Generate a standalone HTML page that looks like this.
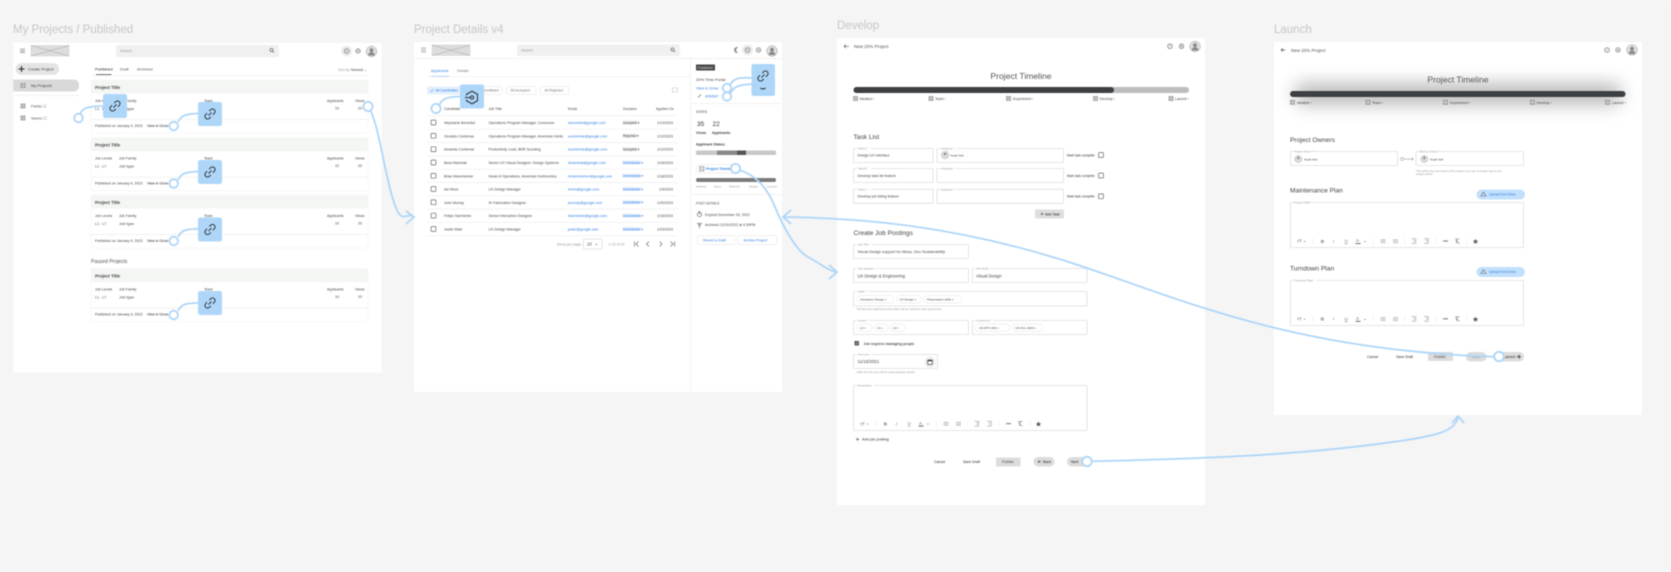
<!DOCTYPE html>
<html lang="en"><head><meta charset="utf-8"><title>Project flows</title>
<style>
html,body{margin:0;padding:0;background:#f5f5f5;width:1671px;height:572px;overflow:hidden}
svg{display:block;filter:blur(.4px)}
text{font-family:"Liberation Sans",sans-serif;font-size:4.4px;fill:#555}
.h{font-size:11.5px;fill:#c6c6c6}
.d{fill:#222}.m{fill:#777}.l{fill:#999;font-size:3.6px}.b{fill:#2f7fe0}
.t{font-size:5px;font-weight:bold;fill:#444}
.s{font-size:6.6px;fill:#444}
.pt{font-size:8.6px;fill:#555;text-anchor:middle}
.lb{font-size:3.6px;fill:#444}
.v{font-size:4.6px;fill:#555}
.f{fill:#fff;stroke:#ddd;stroke-width:.8}
.line{stroke:#eee;stroke-width:.7;fill:none}
.c{fill:none;stroke:#aed6f9;stroke-width:1.8}
.n{fill:#fff;stroke:#aed6f9;stroke-width:1.8}
.a{fill:#aed6f9}
.i{fill:none;stroke:#666;stroke-width:.7}
.k{fill:none;stroke:#222;stroke-width:.9}
.chip{fill:#fff;stroke:#e2e2e2;stroke-width:.5}
</style></head><body>
<svg xmlns="http://www.w3.org/2000/svg" width="1671" height="572" viewBox="0 0 1671 572">
<defs>
<g id="ph"><rect x="-2" y="-2" width="4" height="4" fill="#e4e4e4" stroke="#666" stroke-width=".5"/><path d="M-2-2 2 2M2-2-2 2" stroke="#666" stroke-width=".4"/></g>
<g id="logo"><rect width="38" height="10.5" fill="#ddd" stroke="#bbb" stroke-width=".3"/><path d="M0 0 38 10.5M38 0 0 10.5" stroke="#999" stroke-width=".4"/></g>
<g id="av"><circle r="5.3" fill="#e0e0e0" stroke="#999" stroke-width=".5"/><circle cy="-1.3" r="1.9" fill="#888"/><path d="M-3.3 4C-3 1-1.500 .8 0 .8S3 1 3.300 4Z" fill="#888"/></g>
<g id="gear"><circle r="2.2" class="i"/><circle r=".8" fill="#666"/></g>
<g id="help"><circle r="2.3" class="i"/><path d="M0-1V.6" stroke="#666" stroke-width=".6"/></g>
<g id="link"><path class="k" transform="rotate(-45)" d="M-1.500-2.600H-3.500A2.600 2.600 0 0 0-3.500 2.600H-1.500M1.500-2.600H3.500A2.600 2.600 0 0 1 3.500 2.600H1.500M-2.200 0H2.200"/></g>
<g id="box"><rect x="-2.4" y="-2.4" width="4.8" height="4.8" rx=".6" fill="#fff" stroke="#666" stroke-width=".7"/></g>
<g id="tb" fill="#666">
<text x="6" y="1.5" style="font-size:4.4px" fill="#666">тT</text><path d="M12.5 0h2l-1 1Z"/>
<rect x="21.5" y="-3" width=".4" height="6" fill="#e2e2e2"/>
<text x="29.7" y="1.6" style="font-size:4.6px;font-weight:bold;fill:#777">B</text>
<text x="41.7" y="1.6" style="font-size:4.6px;font-style:italic;fill:#777">I</text>
<text x="53.5" y="1.4" style="font-size:4.6px;text-decoration:underline;fill:#777">U</text>
<text x="65" y="1" style="font-size:4.6px;fill:#666">A</text><rect x="64.6" y="2" width="5" height=".7" fill="#333"/><path d="M73 0h2l-1 1Z"/>
<rect x="82" y="-3" width=".4" height="6" fill="#e2e2e2"/>
<path d="M89.5-1.5h5M89.5 0h5M89.5 1.5h5M102-1.5h5M102 0h5M102 1.5h5" stroke="#888" stroke-width=".5"/>
<rect x="113.5" y="-3" width=".4" height="6" fill="#e2e2e2"/>
<path d="M120.5-2.5h5M122.5-1h3M122.5.5h3M120.5 2.2h5M133-2.5h5M135-1h3M135 .5h3M133 2.2h5" stroke="#888" stroke-width=".5"/>
<rect x="144.5" y="-3" width=".4" height="6" fill="#e2e2e2"/>
<path d="M152-.2h5" stroke="#888" stroke-width="1.2"/>
<path d="M164-2.2h4.5M166.3-2 165.5 2.2M164.5-.8 168.5 2.4" stroke="#777" stroke-width=".6" fill="none"/>
<rect x="175.5" y="-3" width=".4" height="6" fill="#e2e2e2"/>
<path d="M184.5-2.4 185.3-.6 187.2-.5 185.8.7 186.3 2.6 184.5 1.6 182.7 2.6 183.2.7 181.8-.5 183.7-.6Z" fill="#555"/>
</g>
<g id="card">
<rect x="91" y="0" width="277" height="53" rx="1.5" fill="#fff" stroke="#f0f0f0" stroke-width=".5"/>
<path d="M91 13.5V1.5Q91 0 92.5 0H366.5Q368 0 368 1.5V13.5Z" fill="#f4f6f4"/>
<text class="t" x="95" y="9" style="font-size:4.4px">Project Title</text>
<text class="lb" x="95" y="22">Job Levels</text><text class="lb" x="119" y="22">Job Family</text><text class="lb" x="204" y="22">Team</text><text class="lb" x="327" y="22">Applicants</text><text class="lb" x="355" y="22">Views</text>
<text class="lb" x="95" y="30">L1 - L7</text><text class="lb" x="119" y="30" style="font-size:4px">Job type</text><text class="lb" x="335" y="29.5">10</text><text class="lb" x="358" y="29.5">20</text>
<path class="line" d="M91 39.5H368"/>
<text class="lb" x="95" y="47" style="font-size:3.6px">Published on January 4, 2023</text><text class="d" x="147" y="47" style="font-size:3.6px">View in Grow</text>
</g>
<g id="sq"><rect width="24" height="24" rx="2.2" class="a"/><use href="#link" x="12" y="12"/></g>
<g id="row"><use href="#box" x="433.5"/><path class="line" d="M427 6.7H678"/></g>
</defs>

<rect width="1671" height="572" fill="#f5f5f5"/>
<text class="h" x="13" y="33">My Projects / Published</text>
<text class="h" x="414" y="33">Project Details v4</text>
<text class="h" x="837" y="29">Develop</text>
<text class="h" x="1274" y="33">Launch</text>

<!-- Frame 1 -->
<rect x="13.3" y="42.7" width="368.4" height="330" fill="#fff"/>
<path d="M20 49h5M20 50.7h5M20 52.4h5" stroke="#666" stroke-width=".6"/>
<use href="#logo" x="31" y="45.5"/>
<rect x="116" y="45" width="163" height="12" rx="2" fill="#f0f0f0"/>
<text class="l" x="120" y="52" style="font-size:3.8px">Search</text>
<circle cx="271.5" cy="50" r="1.5" class="i"/><path d="M272.6 51.1 274 52.6" class="i"/>
<circle cx="346.7" cy="51" r="5.4" fill="#ececec"/><use href="#help" x="346.7" y="51"/>
<use href="#gear" x="358" y="51"/>
<use href="#av" x="371.5" y="51.5"/>
<rect x="15.5" y="63" width="43.5" height="12" rx="6" fill="#e4e4e4"/>
<path d="M18.5 69h6M21.5 66v6" stroke="#222" stroke-width="1"/>
<text class="v" x="28" y="70.7" style="font-size:4px;fill:#444">Create Project</text>
<path d="M13.3 79.5H73Q79 79.5 79 85.5T73 91.5H13.3Z" fill="#d9d9d9"/>
<use href="#ph" x="23" y="85.5"/><text x="31" y="87" style="font-size:4px;fill:#444">My Projects</text>
<path class="line" d="M13.3 95.5H79"/>
<use href="#ph" x="23" y="106"/><text x="31" y="107.5" style="font-size:4px">Fields ☐</text>
<use href="#ph" x="23" y="118"/><text x="31" y="119.5" style="font-size:4px">Saves ☐</text>
<text class="d" x="95" y="70.5" style="font-size:4px">Published</text><text x="120" y="70.5" style="font-size:4px">Draft</text><text x="137" y="70.5" style="font-size:4px">Archived</text>
<rect x="96" y="74.2" width="15.5" height=".8" fill="#555"/><path class="line" d="M91 75.5H368"/>
<text class="l" x="338" y="71">Sort by:</text><text class="lb" x="351" y="71">Newest ⌄</text>
<use href="#card" y="80"/><use href="#card" y="137.7"/><use href="#card" y="195"/>
<text x="91" y="263" style="font-size:5px;fill:#555">Paused Projects</text>
<use href="#card" y="268.6"/>
<g>
<path class="c" d="M79 116C82 108 86 106.500 103 106"/><circle class="n" cx="78.500" cy="118" r="4.300"/><use href="#sq" x="103" y="94"/>
<path class="c" d="M178 122C181 116 184 114 198 113.500"/><circle class="n" cx="173.700" cy="126" r="4.300"/><use href="#sq" x="198" y="102"/>
<path class="c" d="M178 180C181 174 184 172 198 171.500"/><circle class="n" cx="173.700" cy="183.500" r="4.300"/><use href="#sq" x="198" y="160"/>
<path class="c" d="M178 237C181 231 184 229 198 229"/><circle class="n" cx="173.700" cy="241" r="4.300"/><use href="#sq" x="198" y="217.500"/>
<path class="c" d="M178 311C181 305 184 303 198 303"/><circle class="n" cx="173.700" cy="315" r="4.300"/><use href="#sq" x="198" y="291"/>
</g>

<!-- Frame 2 -->
<rect x="414" y="42" width="368" height="350" fill="#fff"/>
<path d="M421 48h5M421 50h5M421 52h5" stroke="#666" stroke-width=".6"/>
<use href="#logo" x="432" y="45"/>
<rect x="517" y="44.500" width="163" height="11.500" rx="2" fill="#f0f0f0"/>
<text class="l" x="521" y="51.500" style="font-size:3.800px">Search</text>
<circle cx="672.500" cy="49.500" r="1.500" class="i"/><path d="M673.600 50.600 675 52" class="i"/>
<path class="i" d="M737 47.500A2.500 2.500 0 1 0 737 52.500 3 3 0 0 1 737 47.500Z"/>
<circle cx="747.500" cy="50" r="5.400" fill="#ececec"/><use href="#help" x="747.500" y="50"/><use href="#gear" x="758.500" y="50"/><use href="#av" x="772" y="51"/>
<path class="line" d="M414 58.500H782M690.500 58.500V392"/>
<text class="b" x="431" y="72" style="font-size:3.800px">Applicants</text><text class="m" x="457" y="72" style="font-size:3.800px">Details</text>
<rect x="431" y="76" width="18" height=".8" fill="#5b9cf0"/><path class="line" d="M427 76.700H690"/>
<rect x="427" y="86.500" width="38" height="8" rx="2" fill="#e3effd"/><path d="M430 90.500 431.500 92 433.500 89" fill="none" stroke="#4a90e2" stroke-width=".5"/>
<text class="b" x="435.500" y="91.700" style="font-size:3.500px">All Candidates</text>
<rect x="468" y="86.500" width="34" height="8" rx="2" class="chip"/><text class="m" x="482" y="91.700" style="font-size:3.500px">Shortlisted</text>
<rect x="506.500" y="86.500" width="29.500" height="8" rx="2" class="chip"/><text class="m" x="510.500" y="91.700" style="font-size:3.500px">All Accepted</text>
<rect x="540.500" y="86.500" width="28.500" height="8" rx="2" class="chip"/><text class="m" x="544.500" y="91.700" style="font-size:3.500px">All Rejected</text>
<rect x="672.500" y="88" width="5" height="4" fill="none" stroke="#bbb" stroke-width=".5"/>
<g style="font-size:3.600px">
<text class="lb" x="444" y="110">Candidate</text><text class="lb" x="488.500" y="110">Job Title</text><text class="lb" x="568" y="110">Email</text><text class="lb" x="623" y="110">Decision</text><text class="lb" x="656" y="110">Applied On</text>
</g>
<path class="line" d="M427 115.600H678"/>
<use href="#row" y="122.500"/><use href="#row" y="135.800"/><use href="#row" y="149.200"/><use href="#row" y="162.500"/><use href="#row" y="175.800"/><use href="#row" y="189"/><use href="#row" y="202.300"/><use href="#row" y="215.600"/><use href="#row" y="229"/>
<g class="rows">
<rect x="622.500" y="120.500" width="15" height="4" fill="#eee"/><rect x="622.500" y="133.800" width="14" height="4" fill="#eee"/><rect x="622.500" y="147.200" width="15" height="4" fill="#eee"/>
<rect x="622.500" y="160.500" width="18" height="4" fill="#e3effd"/><rect x="622.500" y="173.800" width="18" height="4" fill="#e3effd"/><rect x="622.500" y="187" width="18" height="4" fill="#e3effd"/><rect x="622.500" y="200.300" width="18" height="4" fill="#e3effd"/><rect x="622.500" y="213.600" width="18" height="4" fill="#e3effd"/><rect x="622.500" y="227" width="18" height="4" fill="#e3effd"/>
<text class="lb" x="444" y="124">Stephanie Benedict</text><text class="lb" x="488.500" y="124">Operations Program Manager, Consumer</text><text class="lb" x="568" y="124" style="fill:#2f7fe0">sbenedict@google.com</text><text class="lb" x="623" y="123.800" style="font-size:3.300px">Accepted ▾</text><text class="lb" x="657" y="124">1/13/2023</text>
<text class="lb" x="444" y="137.300">Osvaldo Contreras</text><text class="lb" x="488.500" y="137.300">Operations Program Manager, American Hortic</text><text class="lb" x="568" y="137.300" style="fill:#2f7fe0">ocontreras@google.com</text><text class="lb" x="623" y="137.100" style="font-size:3.300px">Rejected ▾</text><text class="lb" x="657" y="137.300">1/12/2023</text>
<text class="lb" x="444" y="150.700">Amanda Contreras</text><text class="lb" x="488.500" y="150.700">Productivity Lead, BDR Scouting</text><text class="lb" x="568" y="150.700" style="fill:#2f7fe0">acontreras@google.com</text><text class="lb" x="623" y="150.500" style="font-size:3.300px">Accepted ▾</text><text class="lb" x="657" y="150.700">1/12/2023</text>
<text class="lb" x="444" y="164">Bess Marshall</text><text class="lb" x="488.500" y="164">Senior UX Visual Designer, Design Systems</text><text class="lb" x="568" y="164" style="fill:#2f7fe0">dmarshall@google.com</text><text class="lb" x="623" y="163.800" style="font-size:3.300px;fill:#2f7fe0">Unreviewed ▾</text><text class="lb" x="657" y="164">1/16/2023</text>
<text class="lb" x="444" y="177.300">Brian Mannheimer</text><text class="lb" x="488.500" y="177.300">Head of Operations, American Hortinomics</text><text class="lb" x="568" y="177.300" style="fill:#2f7fe0">bmannheimer@google.com</text><text class="lb" x="623" y="177.100" style="font-size:3.300px;fill:#2f7fe0">Unreviewed ▾</text><text class="lb" x="657" y="177.300">1/18/2023</text>
<text class="lb" x="444" y="190.500">Ian Mora</text><text class="lb" x="488.500" y="190.500">UX Design Manager</text><text class="lb" x="568" y="190.500" style="fill:#2f7fe0">imora@google.com</text><text class="lb" x="623" y="190.300" style="font-size:3.300px;fill:#2f7fe0">Unreviewed ▾</text><text class="lb" x="659" y="190.500">1/9/2023</text>
<text class="lb" x="444" y="203.800">John Murray</text><text class="lb" x="488.500" y="203.800">Sr Fabrication Designer</text><text class="lb" x="568" y="203.800" style="fill:#2f7fe0">jmurray@google.com</text><text class="lb" x="623" y="203.600" style="font-size:3.300px;fill:#2f7fe0">Unreviewed ▾</text><text class="lb" x="657" y="203.800">1/20/2023</text>
<text class="lb" x="444" y="217.100">Felipe Sarmiento</text><text class="lb" x="488.500" y="217.100">Senior Interaction Designer</text><text class="lb" x="568" y="217.100" style="fill:#2f7fe0">fsarmiento@google.com</text><text class="lb" x="623" y="216.900" style="font-size:3.300px;fill:#2f7fe0">Unreviewed ▾</text><text class="lb" x="657" y="217.100">1/16/2023</text>
<text class="lb" x="444" y="230.500">Justin Watz</text><text class="lb" x="488.500" y="230.500">UX Design Manager</text><text class="lb" x="568" y="230.500" style="fill:#2f7fe0">jwatz@google.com</text><text class="lb" x="623" y="230.300" style="font-size:3.300px;fill:#2f7fe0">Unreviewed ▾</text><text class="lb" x="657" y="230.500">1/23/2023</text>
</g>
<text class="l" x="557" y="245.500">Items per page:</text>
<rect x="583.500" y="239" width="18.500" height="10" rx=".5" class="f"/><text class="lb" x="587" y="245.500" style="font-size:4.200px">10</text><path d="M595.500 244h2l-1 1.200Z" fill="#666"/>
<text class="l" x="608.500" y="245.500">1-10 of 22</text>
<path class="i" d="M634.500 241.500v5M638.500 241.500 636 244 638.500 246.500M649 241.500 646.500 244 649 246.500M659.500 241.500 662 244 659.500 246.500M670.500 241.500 673 244 670.500 246.500M674.500 241.500v5"/>
<!-- right panel -->
<rect x="696" y="64.500" width="19" height="6" rx=".5" fill="#444"/><text x="697.500" y="69" style="font-size:3.500px;fill:#ddd">Published</text>
<text x="696" y="81" style="font-size:4px;fill:#444">20% Time Portal</text><text class="b" x="696" y="89.500" style="font-size:3.800px">View in Grow</text>
<path class="i" d="M698 97.500 701 94.500"/><text class="b" x="705" y="97.700" style="font-size:3.500px">4050507</text>
<path class="line" d="M690.500 103.500H782M690.500 194.500H782"/>
<text class="lb" x="696" y="113">STATS</text>
<text x="697" y="126" style="font-size:6.500px;fill:#333">35</text><text x="712.500" y="126" style="font-size:6.500px;fill:#333">22</text>
<text class="lb" x="696" y="133.800" style="font-weight:bold">Views</text><text class="lb" x="712" y="133.800" style="font-weight:bold">Applicants</text>
<text class="lb" x="696" y="145.500" style="font-weight:bold">Applicant Status:</text>
<rect x="696" y="150.500" width="80" height="4.500" rx="1" fill="#c8c8c8"/><rect x="717" y="150.500" width="20" height="4.500" fill="#888"/><rect x="737" y="150.500" width="9" height="4.500" fill="#555"/>
<rect x="696" y="164.500" width="42" height="8.500" rx="4.200" fill="#fff" stroke="#e0e0e0" stroke-width=".5"/><rect x="699.500" y="166.500" width="4.500" height="4.500" fill="#ddd" stroke="#666" stroke-width=".4"/>
<text class="b" x="706" y="170" style="font-size:3.600px;font-weight:bold">Project Timeline</text>
<rect x="696" y="178" width="80" height="4" rx="2" fill="#7a7a7a"/>
<text class="l" x="696" y="187.500" style="font-size:3px">Ideation</text><text class="l" x="714" y="187.500" style="font-size:3px">Story</text><text class="l" x="729" y="187.500" style="font-size:3px">Refresh</text><text class="l" x="749" y="187.500" style="font-size:3px">Deploy</text><text class="l" x="767" y="187.500" style="font-size:3px">Launch</text>
<text class="lb" x="696" y="204.500" style="font-size:3.300px">POST DETAILS</text>
<circle cx="699.500" cy="214.500" r="2.200" class="i"/><path class="i" d="M699.500 213v1.500M698.500 211.700h2"/>
<text class="lb" x="705" y="216">Expired December 25, 2022</text>
<path class="i" d="M697 223.500h5M698 225h3M699.500 225v3"/>
<text class="lb" x="705" y="226">Archived 12/31/2022 at 4:30PM</text>
<rect x="697.500" y="235.500" width="37" height="9" rx="1" class="chip"/><text class="b" x="703" y="241.500" style="font-size:3.500px">Revert to Draft</text>
<rect x="737.500" y="235.500" width="39" height="9" rx="1" class="chip"/><text class="b" x="743.500" y="241.500" style="font-size:3.500px">Archive Project</text>
<!-- frame 2 nodes -->
<path class="c" d="M439 105C443 98 447 97 460 96.500"/><circle class="n" cx="436" cy="108.500" r="4.600"/>
<rect x="460" y="84.500" width="24" height="24" rx="2.200" class="a"/>
<path class="k" d="M472 91.200 477.500 94.300V100.700L472 103.800 466.500 100.700V99.500M466.500 95.500V94.300L472 91.200"/><circle cx="472" cy="97.500" r="1.600" class="k"/><path class="k" d="M465 97.500H470"/>
<path class="c" d="M730 85C733 79 738 77 752 78M731 93C733 87 738 85 752 84"/>
<circle class="n" cx="727" cy="88" r="4.200"/><circle class="n" cx="727" cy="96.500" r="4.200"/>
<rect x="751.500" y="64" width="23.500" height="32" rx="2.200" class="a"/><use href="#link" x="763" y="76"/>
<path class="k" d="M760.500 88Q763 90 765.500 88"/>

<!-- Frame 3 -->
<rect x="837" y="38" width="368" height="467" fill="#fff"/>
<path class="i" d="M849 46.300H844M846 44.500 844 46.300 846 48"/>
<text class="v" x="854" y="48" style="font-size:4.500px;fill:#555">New 20% Project</text>
<use href="#help" x="1170" y="46.300"/><use href="#gear" x="1181.500" y="46.300"/><use href="#av" x="1195" y="46.500"/>
<text class="pt" x="1021" y="79">Project Timeline</text>
<rect x="853.500" y="87" width="335.500" height="6" rx="3" fill="#bdbdbd"/><rect x="853.500" y="87" width="260.500" height="6" rx="3" fill="#3c4043"/>
<use href="#ph" x="855.500" y="98.500"/><text class="lb" x="859.500" y="100">Ideation ›</text>
<use href="#ph" x="931" y="98.500"/><text class="lb" x="935" y="100">Team ›</text>
<use href="#ph" x="1008.500" y="98.500"/><text class="lb" x="1013" y="100">Experiment ›</text>
<use href="#ph" x="1095.500" y="98.500"/><text class="lb" x="1099.500" y="100">Develop ›</text>
<use href="#ph" x="1171" y="98.500"/><text class="lb" x="1175" y="100">Launch ›</text>
<text class="s" x="853.500" y="139">Task List</text>
<g>
<rect class="f" x="853.500" y="148.500" width="79.500" height="14" rx=".7"/><rect class="f" x="937" y="148.500" width="126.500" height="14" rx=".7"/>
<rect x="857" y="147" width="14" height="3" fill="#fff"/><text class="l" x="858" y="149.500" style="font-size:2.800px">Task A *</text><rect x="940" y="147" width="16" height="3" fill="#fff"/><text class="l" x="941" y="149.500" style="font-size:2.800px">Assignee *</text>
<text class="lb" x="857.500" y="156.500" style="font-size:3.600px">Design UX interface</text><circle cx="945" cy="155" r="3.700" fill="#ddd" stroke="#999" stroke-width=".4"/><circle cx="945" cy="154" r="1.200" fill="#888"/><rect x="941" y="151" width="27" height="8" rx="4" fill="none" stroke="#eee" stroke-width=".4"/><text class="lb" x="950.500" y="156.500" style="font-size:3px">Noah Nell</text>
<text class="lb" x="1067" y="156.500" style="font-size:3.200px;fill:#333">Mark task complete</text><use href="#box" x="1101" y="155"/>
<rect class="f" x="853.500" y="168.500" width="79.500" height="14" rx=".7"/><rect class="f" x="937" y="168.500" width="126.500" height="14" rx=".7"/>
<rect x="857" y="167" width="14" height="3" fill="#fff"/><text class="l" x="858" y="169.500" style="font-size:2.800px">Task B *</text><rect x="940" y="167" width="16" height="3" fill="#fff"/><text class="l" x="941" y="169.500" style="font-size:2.800px">Assignee *</text>
<text class="lb" x="857.500" y="176.800" style="font-size:3.600px">Develop task list feature</text>
<text class="lb" x="1067" y="176.800" style="font-size:3.200px;fill:#333">Mark task complete</text><use href="#box" x="1101" y="175.500"/>
<rect class="f" x="853.500" y="189.300" width="79.500" height="14" rx=".7"/><rect class="f" x="937" y="189.300" width="126.500" height="14" rx=".7"/>
<rect x="857" y="188" width="14" height="3" fill="#fff"/><text class="l" x="858" y="190.300" style="font-size:2.800px">Task C *</text><rect x="940" y="188" width="16" height="3" fill="#fff"/><text class="l" x="941" y="190.300" style="font-size:2.800px">Assignee *</text>
<text class="lb" x="857.500" y="197.500" style="font-size:3.600px">Develop job listing feature</text>
<text class="lb" x="1067" y="197.500" style="font-size:3.200px;fill:#333">Mark task complete</text><use href="#box" x="1101" y="196.300"/>
</g>
<rect x="1035" y="209.500" width="29" height="9" rx="1" fill="#dedede"/><path d="M1040.500 214h3M1042 212.500v3" stroke="#444" stroke-width=".5"/><text class="lb" x="1045" y="215.300" style="fill:#222">Add Task</text>
<text class="s" x="853.500" y="235">Create Job Postings</text>
<rect class="f" x="853.500" y="244.500" width="115" height="14" rx=".7"/><rect x="857" y="243" width="15" height="3" fill="#fff"/><text class="l" x="858" y="245.500" style="font-size:2.800px">Job Title *</text>
<text class="lb" x="857.500" y="253" style="font-size:3.900px">Visual Design support for Mesa, Geo Sustainability</text>
<rect class="f" x="853.500" y="268.500" width="115" height="14" rx=".7"/><rect x="857" y="267" width="18" height="3" fill="#fff"/><text class="l" x="858" y="269.500" style="font-size:2.800px">Job category</text>
<text class="lb" x="857.500" y="277.300" style="font-size:4.200px">UX Design &amp; Engineering</text>
<rect class="f" x="972.500" y="268.500" width="114.500" height="14" rx=".7"/><rect x="975" y="267" width="15" height="3" fill="#fff"/><text class="l" x="976" y="269.500" style="font-size:2.800px">Job family</text>
<text class="lb" x="976" y="277.300" style="font-size:4.200px">Visual Design</text>
<rect class="f" x="853.500" y="291.500" width="233.500" height="14.500" rx=".7"/><rect x="857" y="290" width="11" height="3" fill="#fff"/><text class="l" x="858" y="292.500" style="font-size:2.800px">Skills *</text>
<rect class="chip" x="857" y="295.500" width="37" height="7.500" rx="3.700"/><text class="lb" x="860" y="300.500" style="font-size:3px">Interaction Design  ×</text>
<rect class="chip" x="896.500" y="295.500" width="25" height="7.500" rx="3.700"/><text class="lb" x="899.500" y="300.500" style="font-size:3px">UX Design  ×</text>
<rect class="chip" x="924" y="295.500" width="38" height="7.500" rx="3.700"/><text class="lb" x="927" y="300.500" style="font-size:3px">Presentation skills  ×</text>
<text class="l" x="856.500" y="310" style="font-size:2.900px">Tell the best applicants what skills will be useful for this opportunity</text>
<rect class="f" x="853.500" y="320.500" width="115" height="14" rx=".7"/><rect x="857" y="319" width="12" height="3" fill="#fff"/><text class="l" x="858" y="321.500" style="font-size:2.800px">Levels *</text>
<rect class="chip" x="857" y="324" width="15" height="7.500" rx="3.700"/><text class="lb" x="860" y="329" style="font-size:3px">L3 ×</text>
<rect class="chip" x="874" y="324" width="14" height="7.500" rx="3.700"/><text class="lb" x="877" y="329" style="font-size:3px">L4 ×</text>
<rect class="chip" x="890" y="324" width="15" height="7.500" rx="3.700"/><text class="lb" x="893" y="329" style="font-size:3px">L5 ×</text>
<rect class="f" x="972.500" y="320.500" width="114.500" height="14" rx=".7"/><rect x="975" y="319" width="18" height="3" fill="#fff"/><text class="l" x="976" y="321.500" style="font-size:2.800px">Location(s) *</text>
<rect class="chip" x="975" y="324" width="34.500" height="7.500" rx="3.700"/><text class="lb" x="979" y="329" style="font-size:3px">US-MTV-150       ×</text>
<rect class="chip" x="1012" y="324" width="31" height="7.500" rx="3.700"/><text class="lb" x="1015" y="329" style="font-size:3px">US-SVL-1600  ×</text>
<rect x="854.500" y="341" width="4.500" height="4.500" rx=".5" fill="#555"/><path d="M855.500 343.300 856.500 344.300 858 342" stroke="#fff" stroke-width=".5" fill="none"/>
<text class="lb" x="863.500" y="345" style="font-size:3.500px;font-weight:bold;fill:#555">Job requires managing people</text>
<rect class="f" x="853.500" y="354.500" width="84" height="14" rx=".7"/><rect x="857" y="353" width="14" height="3" fill="#fff"/><text class="l" x="858" y="355.500" style="font-size:2.800px">Post end</text>
<text class="lb" x="857.500" y="363" style="font-size:4.400px">11/16/2021</text>
<circle cx="930" cy="362" r="5.500" fill="#eee"/><rect x="927.700" y="360" width="4.600" height="4.400" rx=".4" fill="#fff" stroke="#444" stroke-width=".7"/><rect x="927.700" y="360" width="4.600" height="1.300" fill="#444"/>
<text class="l" x="857" y="373" style="font-size:2.900px">Date the trip post will be automatically closed</text>
<rect class="f" x="853.500" y="385.500" width="233.500" height="45" rx=".7"/><rect x="857" y="384" width="17" height="3" fill="#fff"/><text class="l" x="857.500" y="386.500" style="font-size:2.800px">Description</text>
<use href="#tb" x="854" y="423.800"/>
<path d="M856 439.300h3M857.500 437.800v3" stroke="#444" stroke-width=".6"/><text class="lb" x="862" y="440.500" style="font-size:3.900px;fill:#333">Add job posting</text>
<text class="lb" x="934" y="463" style="fill:#222">Cancel</text><text class="lb" x="963" y="463" style="fill:#222">Save Draft</text>
<rect x="996" y="457.500" width="24.500" height="9" rx="1" fill="#dcdcdc"/><text class="lb" x="1002" y="463">Publish</text>
<rect x="1033.500" y="457" width="21" height="9.500" rx="4.700" fill="#dcdcdc"/><path d="M1038 461.700h3M1038 461.700 1039.500 460.300M1038 461.700 1039.500 463" stroke="#222" stroke-width=".5"/><text class="lb" x="1043" y="463" style="fill:#222">Back</text>
<rect x="1067" y="457" width="20" height="9.500" rx="4.700" fill="#dcdcdc"/><text class="lb" x="1071" y="463" style="fill:#222">Next</text>

<!-- Frame 4 -->
<rect x="1274" y="42" width="368" height="373" fill="#fff"/>
<path class="i" d="M1285.500 50H1281M1283 48.300 1281 50 1283 51.700"/>
<text class="v" x="1291" y="52" style="font-size:4.500px">New 20% Project</text>
<use href="#help" x="1607" y="50"/><use href="#gear" x="1618" y="50"/><use href="#av" x="1632" y="50"/>
<rect x="1294" y="84" width="328" height="20" rx="10" fill="#b4b4b4" style="filter:blur(9px)"/>
<text class="pt" x="1458" y="82.500">Project Timeline</text>
<rect x="1290" y="91" width="335.500" height="6" rx="3" fill="#3c4043"/>
<use href="#ph" x="1292.500" y="102.300"/><text class="lb" x="1297" y="103.800">Ideation ›</text>
<use href="#ph" x="1368" y="102.300"/><text class="lb" x="1372" y="103.800">Team ›</text>
<use href="#ph" x="1445.500" y="102.300"/><text class="lb" x="1450" y="103.800">Experiment ›</text>
<use href="#ph" x="1532.500" y="102.300"/><text class="lb" x="1536.500" y="103.800">Develop ›</text>
<use href="#ph" x="1607.500" y="102.300"/><text class="lb" x="1612" y="103.800">Launch ›</text>
<text class="s" x="1290" y="142">Project Owners</text>
<rect class="f" x="1290.500" y="151.500" width="107" height="14" rx=".7"/><rect x="1293" y="150" width="20" height="3" fill="#fff"/><text class="l" x="1294" y="152.500" style="font-size:2.800px">Project Owner *</text>
<circle cx="1298.300" cy="159" r="3.500" fill="#ddd" stroke="#999" stroke-width=".4"/><circle cx="1298.300" cy="158" r="1.200" fill="#888"/><text class="lb" x="1304" y="160.300" style="font-size:3px">Noah Nell</text>
<circle cx="1402" cy="159" r="1.600" fill="#fff" stroke="#888" stroke-width=".5"/><path d="M1403.600 159H1413.500M1411.700 157.500 1413.500 159 1411.700 160.500" fill="none" stroke="#888" stroke-width=".5"/>
<rect class="f" x="1416" y="151.500" width="107.500" height="14" rx=".7"/><rect x="1418.500" y="150" width="21" height="3" fill="#fff"/><text class="l" x="1419.500" y="152.500" style="font-size:2.800px">Backup Owner *</text>
<circle cx="1424.300" cy="159" r="3.500" fill="#ddd" stroke="#999" stroke-width=".4"/><circle cx="1424.300" cy="158" r="1.200" fill="#888"/><text class="lb" x="1430" y="160.300" style="font-size:3px">Noah Nell</text>
<text class="l" x="1416" y="172" style="font-size:2.700px">This will be the new owner of the project if you can no longer stay as the</text><text class="l" x="1416" y="175" style="font-size:2.700px">project owner *</text>
<text class="s" x="1290" y="192.500">Maintenance Plan</text>
<rect x="1476.500" y="189.500" width="48.500" height="10" rx="5" fill="#c2e0fb"/><path d="M1483.500 192 1486 196H1481Z" fill="none" stroke="#666" stroke-width=".6"/><text class="lb" x="1489" y="195.700" style="fill:#2f7fe0;font-size:3.300px">Upload from Drive</text>
<rect class="f" x="1290.500" y="202.500" width="233" height="45" rx=".3"/><rect x="1293" y="201" width="14" height="3" fill="#fff"/><text class="l" x="1294" y="203.500" style="font-size:2.800px">Project Plan*</text>
<use href="#tb" x="1291" y="241.200"/>
<text class="s" x="1290" y="270.500">Turndown Plan</text>
<rect x="1476.500" y="267" width="48.500" height="10" rx="5" fill="#c2e0fb"/><path d="M1483.500 269.500 1486 273.500H1481Z" fill="none" stroke="#666" stroke-width=".6"/><text class="lb" x="1489" y="273.200" style="fill:#2f7fe0;font-size:3.300px">Upload from Drive</text>
<rect class="f" x="1290.500" y="280.500" width="233" height="45" rx=".3"/><rect x="1293" y="279" width="24" height="3" fill="#fff"/><text class="l" x="1294" y="281.500" style="font-size:2.800px">Turndown Plan*</text>
<use href="#tb" x="1291" y="319"/>
<text class="lb" x="1367" y="358" style="fill:#222">Cancel</text><text class="lb" x="1396" y="358" style="fill:#222">Save Draft</text>
<rect x="1428" y="352" width="25" height="9" rx="1" fill="#dcdcdc"/><text class="lb" x="1434" y="358">Publish</text>
<rect x="1466" y="352" width="20.500" height="9.500" rx="4.700" fill="#dcdcdc"/><text class="lb" x="1470" y="358" style="fill:#888">‹ Back</text>
<rect x="1493" y="352" width="31" height="9.500" rx="4.700" fill="#dcdcdc"/><text class="lb" x="1503.500" y="358" style="fill:#222">Launch</text><path d="M1516.500 356.700h3.500M1518.500 355 1520.300 356.700 1518.500 358.500" fill="none" stroke="#222" stroke-width=".6"/>

<!-- long connectors -->
<path class="c" d="M368 106.500C378 120 383 165 392 196S404 213 413 216"/><path class="c" d="M406 211 414 217 406 224"/>
<circle class="n" cx="368" cy="106.500" r="4.600"/>
<path class="c" d="M736 169C758 175 768 190 775 207S795 250 808 257 826 269 835 272"/><path class="c" d="M829 265 837 272 829 279"/>
<circle class="n" cx="735.500" cy="168.500" r="4.600"/>
<path class="c" d="M784 217C850 218 955 223 1087 268 1190 303 1300 351 1499 357"/><path class="c" d="M791 210 783 217 791 224"/>
<circle class="n" cx="1499" cy="356.500" r="4.700"/>
<path class="c" d="M1087 461.500C1180 459 1290 457 1400 441 1435 436 1457 431 1458 416"/><path class="c" d="M1452 423 1458 416 1464 423"/>
<circle class="n" cx="1087" cy="461.500" r="4.700"/>
</svg>
</body></html>
